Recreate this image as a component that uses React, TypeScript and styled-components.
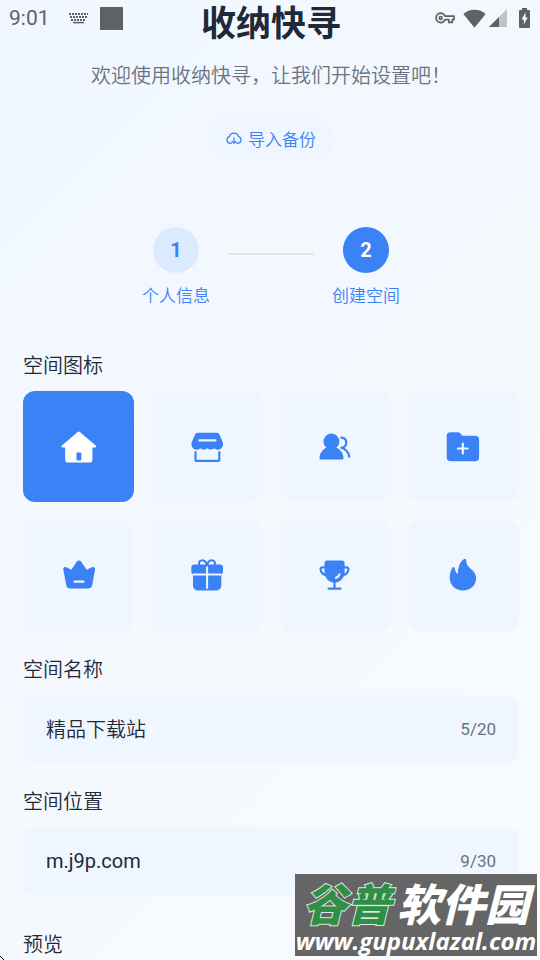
import React, { useState } from "react";
import styled, { createGlobalStyle } from "styled-components";

const GlobalStyle = createGlobalStyle`
  *, *::before, *::after { box-sizing: border-box; }
  body {
    margin: 0;
    font-family: Roboto, "Noto Sans CJK SC", sans-serif;
    color: #1f2937;
  }
  button, input { font: inherit; color: inherit; }
`;

const blue = "#3b82f6";
const tile = "#eff6ff";

const Page = styled.div`
  position: relative;
  min-height: 100vh;
  overflow: hidden;
  background: linear-gradient(135deg, #f0f7ff 0%, #f7fafe 80%, #f8fafe 100%);
`;

const StatusBar = styled.div`
  position: absolute;
  inset: 0 0 auto 0;
  display: flex;
  align-items: center;
  justify-content: space-between;
  height: 36px;
  padding: 0 10px 0 9px;
  color: #5f6163;
`;

const StatusGroup = styled.div<{ $gap: number }>`
  display: flex;
  align-items: center;
  gap: ${(p) => p.$gap}px;
`;

const Clock = styled.time`
  font-size: 21px;
  line-height: 24px;
  margin-right: 7px;
`;

const AppMark = styled.span`
  width: 23px;
  height: 23px;
  background: currentColor;
`;

const Content = styled.main`
  display: flex;
  flex-direction: column;
  padding: 0 21px 0 23px;
`;

const Header = styled.header`
  display: flex;
  flex-direction: column;
  align-items: center;
`;

const Title = styled.h1`
  margin: 0;
  font-size: 35px;
  line-height: 50px;
  font-weight: 700;
`;

const Subtitle = styled.p`
  margin: 11px 0 0;
  font-size: 20px;
  line-height: 30px;
  font-weight: 350;
  color: #6b7280;
`;

const ImportButton = styled.button`
  display: flex;
  align-items: center;
  gap: 6px;
  height: 45px;
  margin-top: 25px;
  padding: 0 18px;
  border: 0;
  border-radius: 23px;
  background: ${tile};
  color: ${blue};
  font-size: 17px;
  font-weight: 350;
  cursor: pointer;
`;

const Steps = styled.ol`
  display: flex;
  justify-content: center;
  gap: 18px;
  margin: 66px 0 42px;
  padding: 0;
  list-style: none;
`;

const Step = styled.li`
  display: flex;
  flex-direction: column;
  align-items: center;
  gap: 10px;
  color: ${blue};
  font-size: 17px;
  line-height: 26px;
  font-weight: 350;
`;

const StepNumber = styled.span<{ $current: boolean }>`
  display: flex;
  align-items: center;
  justify-content: center;
  width: 46px;
  height: 46px;
  border-radius: 50%;
  font-size: 20px;
  font-weight: 700;
  background: ${(p) => (p.$current ? blue : "#dbeafe")};
  color: ${(p) => (p.$current ? "#fff" : blue)};
`;

const StepLine = styled.li`
  width: 86px;
  height: 2px;
  margin-top: 26px;
  background: #e3e5e9;
`;

const Section = styled.section<{ $after: number }>`
  display: flex;
  flex-direction: column;
  gap: 10px;
  margin-bottom: ${(p) => p.$after}px;
`;

const SectionTitle = styled.h2`
  margin: 0;
  font-size: 20px;
  line-height: 30px;
  font-weight: 350;
`;

const FieldLabel = styled.label`
  font-size: 20px;
  line-height: 30px;
  font-weight: 350;
`;

const IconGrid = styled.div`
  display: grid;
  grid-template-columns: repeat(4, 1fr);
  gap: 18px 17px;
`;

const IconTile = styled.button<{ $selected: boolean }>`
  display: flex;
  align-items: center;
  justify-content: center;
  aspect-ratio: 1;
  padding: 0;
  border: 0;
  border-radius: 12px;
  background: ${(p) => (p.$selected ? blue : tile)};
  color: ${(p) => (p.$selected ? "#fff" : blue)};
  --cut: ${(p) => (p.$selected ? blue : tile)};
  cursor: pointer;
`;

const Field = styled.div`
  display: flex;
  align-items: center;
  gap: 12px;
  height: 68px;
  padding: 0 23px;
  border-radius: 12px;
  background: ${tile};
`;

const TextInput = styled.input<{ $light?: boolean }>`
  flex: 1;
  min-width: 0;
  height: 30px;
  padding: 0;
  border: 0;
  outline: 0;
  background: transparent;
  font-size: 20px;
  font-weight: ${(p) => (p.$light ? 350 : 400)};
`;

const Counter = styled.span`
  font-size: 17px;
  color: #6b7280;
`;

const Watermark = styled.aside`
  position: absolute;
  right: 3px;
  bottom: 4px;
  display: flex;
  flex-direction: column;
  align-items: center;
  width: 242px;
  height: 82px;
  padding-top: 9px;
  overflow: hidden;
  background: #656565;
  color: #fff;
  white-space: nowrap;
`;

const WatermarkName = styled.div`
  display: flex;
  gap: 6px;
  font-size: 44px;
  line-height: 46px;
  font-weight: 900;
  font-style: italic;
`;

const WatermarkGreen = styled.span`
  color: #2f8f46;
  paint-order: stroke fill;
  -webkit-text-stroke: 2px #dcebdc;
`;

const WatermarkUrl = styled.div`
  font-family: "Open Sans", "Noto Sans", sans-serif;
  font-size: 24px;
  line-height: 24px;
  font-weight: 700;
  font-style: italic;
`;

const CornerMark = styled.svg`
  position: absolute;
  left: 0;
  bottom: 0;
`;

const Glyph = ({ children }: { children: React.ReactNode }) => (
  <svg width="36" height="36" viewBox="0 0 36 36" fill="currentColor" aria-hidden="true">
    {children}
  </svg>
);

const cut = { stroke: "var(--cut)", strokeWidth: 2.2, strokeLinecap: "round", fill: "none" } as const;
const line = { stroke: "currentColor", strokeWidth: 2.2, strokeLinecap: "round", strokeLinejoin: "round", fill: "none" } as const;

const icons = [
  {
    name: "房屋",
    art: (
      <>
        <path d="M16.7 3a1.6 1.6 0 0 1 2.2 0L34.7 16.6c.8.8.4 2-.7 2h-2.6v12.2a2.8 2.8 0 0 1-2.8 2.8H7a2.8 2.8 0 0 1-2.8-2.8V18.6H1.6c-1.1 0-1.5-1.2-.7-2z" />
        <rect x="15.4" y="23.6" width="4.9" height="7.8" rx="1" fill="var(--cut)" />
      </>
    ),
  },
  {
    name: "商店",
    art: (
      <>
        <path d="M9 3.8h18.6c1.4 0 2.5.8 3 2.1l3 6.9c1.5 4-1 7.9-4.5 7.9-1.9 0-3-.6-3.8-1.5-1.8 1.8-5 1.8-7 0-2 1.8-5.2 1.8-7 0-.8.9-2 1.5-3.9 1.5-3.5 0-6-3.9-4.5-7.9l3-6.9c.5-1.3 1.7-2.1 3.1-2.1z" />
        <path d="M10.4 11.3h16" {...cut} />
        <path d="M6.5 23.2v8c0 .4.3.7.7.7h22.4c.4 0 .7-.3.7-.7v-8" {...line} />
      </>
    ),
  },
  {
    name: "成员",
    art: (
      <>
        <circle cx="14.4" cy="12.5" r="7.9" />
        <path d="M9.4 18.5h10c4.4 2.2 7 6.2 7.1 10.7 0 .9-.5 1.4-1.3 1.4H3.8c-.8 0-1.3-.5-1.3-1.4.1-4.5 2.6-8.5 6.9-10.7z" />
        <path d="M24.4 8.6c3 .1 4.8 2.2 4.8 5s-1.9 5-4.8 5.200c4.300 1.200 7 4.700 7.900 8.800" {...line} />
      </>
    ),
  },
  {
    name: "文件夹",
    art: (
      <>
        <path d="M5.5 3.2h7.4c1.5 0 2.2.7 3.1 1.8l1.2 1.7h12.9a4 4 0 0 1 4 4v17.5a4 4 0 0 1-4 4H5.7a4 4 0 0 1-4-4V7a3.8 3.8 0 0 1 3.8-3.8z" />
        <path d="M12.9 19.5h9.8M17.8 14.6v9.8" {...cut} />
      </>
    ),
  },
  {
    name: "皇冠",
    art: (
      <>
        <path d="M15.8 3.500c1.200-1.500 3.100-1.500 4.300 0l5.500 8.200 5.200-2.400c2-.8 3.700.3 3.300 2.300l-3 16c-.4 2-1.700 3-3.700 3H9c-2 0-3.300-1-3.700-3l-3-16c-.4-2 1.100-3.100 3.100-2.300l5 2.400z" />
        <path d="M13.500 23.600h9" {...cut} />
      </>
    ),
  },
  {
    name: "礼物",
    art: (
      <>
        <path d="M18 6.800c-1.200-3.200-3.400-4.700-5.600-4.400-2.500.4-3 3-1.800 5M18 6.800c1.200-3.200 3.400-4.700 5.600-4.400 2.500.4 3 3 1.800 5" {...line} strokeWidth={2} />
        <path d="M5.500 6.600h25.300a3.200 3.200 0 0 1 3.200 3.200v3.600a3 3 0 0 1-1.700 2.800v11.600a4.600 4.600 0 0 1-4.600 4.600H8.600A4.600 4.600 0 0 1 4 27.800V16.200a3 3 0 0 1-1.700-2.800V9.800a3.200 3.200 0 0 1 3.200-3.200z" />
        <path d="M4.800 16.600h26.700M18.100 9.300v20.700" {...cut} strokeWidth={2} />
      </>
    ),
  },
  {
    name: "奖杯",
    art: (
      <>
        <path d="M10 2.500h15c1.600 0 2.600 1 2.600 2.600v8.800c0 5.600-4.200 10.700-10.100 10.700S7.500 19.500 7.500 13.900V5.100c0-1.600.9-2.600 2.500-2.600z" />
        <path d="M7.500 9.400H5.300c-1.200 0-1.800.8-1.700 2 .3 3 2.200 5 5 5.700M27.500 9.400h2.200c1.200 0 1.800.8 1.700 2-.3 3-2.200 5-5 5.700M17.500 24v6.500M11.600 30.700h11.800" {...line} />
        <path d="M19 19.900c1.800-.7 2.900-1.900 3.500-3.600" {...cut} />
      </>
    ),
  },
  {
    name: "火焰",
    art: (
      <path d="M19.200 1.100c.9-.6 1.800-.3 1.900.8.100 4.400 2 6.600 4.900 9.200 3.200 2.800 5.100 5.600 5.100 9.200 0 7.300-5.600 12.200-13.100 12.200S4.700 27.500 4.700 19.600c0-4 1.100-7.200 2.500-9.700.6-1 1.900-1.100 2.400 0 .7 2.700 1.300 4.900 3.200 6.300.3-6.300 1.400-11.900 6.400-15.100z" />
    ),
  },
];

const CloudDownload = () => (
  <svg width="16" height="16" viewBox="0 0 16 16" fill="none" stroke="currentColor" strokeWidth="1.2" strokeLinecap="round" strokeLinejoin="round" aria-hidden="true">
    <path d="M5.500 12.200H4.300a3.300 3.300 0 0 1-.8-6.500 4.600 4.600 0 0 1 9 0 3.300 3.300 0 0 1-.8 6.500h-1.200" />
    <path d="M8 6.800v5.300M6 10.400l2 2 2-2" />
  </svg>
);

const KeyboardIcon = () => (
  <svg width="19" height="12" viewBox="0 0 19 12" fill="none" stroke="currentColor" aria-hidden="true">
    <path d="M0 2h19M1 5h17M2 8h15" strokeWidth="2" strokeDasharray="2 1" />
    <path d="M4 10.600h11" strokeWidth="1.500" />
  </svg>
);

const KeyIcon = () => (
  <svg width="20" height="12" viewBox="0 0 20 12" fill="none" stroke="currentColor" strokeWidth="1.700" aria-hidden="true">
    <path d="M10.100 4.200H19v3.400h-1.700v2.800h-3.500V7.600h-3.700A4.700 4.700 0 1 1 10.100 4.200z" strokeLinejoin="round" />
    <circle cx="5.700" cy="5.900" r="1.400" />
  </svg>
);

const WifiIcon = () => (
  <svg width="23" height="19" viewBox="0 0 23 19" fill="currentColor" aria-hidden="true">
    <path d="M11.500 18.700.4 5C6-.8 17-.8 22.600 5z" />
  </svg>
);

const SignalIcon = () => (
  <svg width="18" height="18" viewBox="0 0 18 18" fill="currentColor" aria-hidden="true">
    <path d="M18 0v18H0z" opacity="0.350" />
    <path d="M10 8v10H0z" />
  </svg>
);

const BatteryIcon = () => (
  <svg width="11" height="20" viewBox="0 0 11 20" aria-hidden="true">
    <path d="M3 0h5v2h2a1 1 0 0 1 1 1v16a1 1 0 0 1-1 1H1a1 1 0 0 1-1-1V3a1 1 0 0 1 1-1h2z" fill="currentColor" />
    <path d="M6.500 4.500 2.500 11.500h2.300v5l3.900-7H6.500z" fill="#f3f8ff" />
  </svg>
);

export default function App() {
  const [selected, setSelected] = useState(0);
  const [name, setName] = useState("精品下载站");
  const [place, setPlace] = useState("m.j9p.com");

  return (
    <Page>
      <GlobalStyle />
      <Content>
        <Header>
          <Title>收纳快寻</Title>
          <Subtitle>欢迎使用收纳快寻，让我们开始设置吧！</Subtitle>
          <ImportButton type="button">
            <CloudDownload />
            导入备份
          </ImportButton>
        </Header>

        <Steps>
          <Step>
            <StepNumber $current={false}>1</StepNumber>
            个人信息
          </Step>
          <StepLine aria-hidden="true" />
          <Step aria-current="step">
            <StepNumber $current>2</StepNumber>
            创建空间
          </Step>
        </Steps>

        <Section $after={23}>
          <SectionTitle>空间图标</SectionTitle>
          <IconGrid>
            {icons.map((icon, i) => (
              <IconTile
                key={icon.name}
                type="button"
                aria-label={icon.name}
                aria-pressed={i === selected}
                $selected={i === selected}
                onClick={() => setSelected(i)}
              >
                <Glyph>{icon.art}</Glyph>
              </IconTile>
            ))}
          </IconGrid>
        </Section>

        <Section $after={24}>
          <FieldLabel htmlFor="space-name">空间名称</FieldLabel>
          <Field>
            <TextInput id="space-name" $light maxLength={20} value={name} onChange={(e) => setName(e.target.value)} />
            <Counter>{name.length}/20</Counter>
          </Field>
        </Section>

        <Section $after={35}>
          <FieldLabel htmlFor="space-place">空间位置</FieldLabel>
          <Field>
            <TextInput id="space-place" maxLength={30} value={place} onChange={(e) => setPlace(e.target.value)} />
            <Counter>{place.length}/30</Counter>
          </Field>
        </Section>

        <SectionTitle>预览</SectionTitle>
      </Content>

      <StatusBar>
        <StatusGroup $gap={12}>
          <Clock>9:01</Clock>
          <KeyboardIcon />
          <AppMark />
        </StatusGroup>
        <StatusGroup $gap={12}>
          <StatusGroup $gap={8}>
            <KeyIcon />
            <StatusGroup $gap={3}>
              <WifiIcon />
              <SignalIcon />
            </StatusGroup>
          </StatusGroup>
          <BatteryIcon />
        </StatusGroup>
      </StatusBar>

      <Watermark>
        <WatermarkName>
          <WatermarkGreen>谷普</WatermarkGreen>
          <span>软件园</span>
        </WatermarkName>
        <WatermarkUrl>www.gupuxlazal.com</WatermarkUrl>
      </Watermark>

      <CornerMark width="4" height="4" viewBox="0 0 4 4" aria-hidden="true">
        <path d="M0 0h1v1H0zM1 1h1v1H1zM2 2h1v1H2zM3 3h1v1H3z" fill="#000" />
      </CornerMark>
    </Page>
  );
}
